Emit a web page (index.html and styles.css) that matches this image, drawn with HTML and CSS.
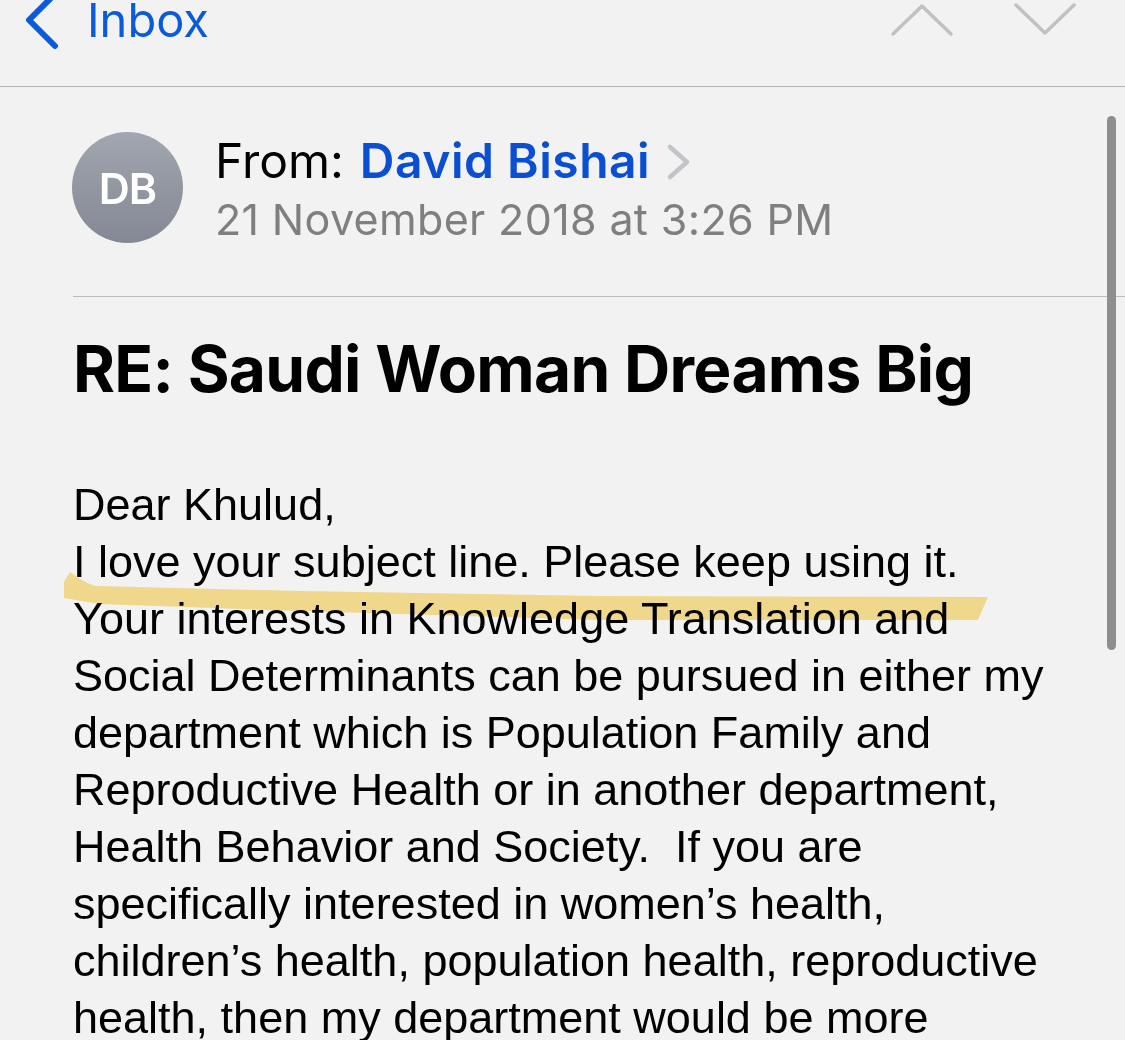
FILE: index.html
```
<!DOCTYPE html>
<html>
<head>
<meta charset="utf-8">
<link rel="stylesheet" href="styles.css">
</head>
<body>
<div class="screen">
  <div class="nav">
    <div class="back">
      <svg class="back-chev" width="40" height="60" viewBox="0 0 40 60"><path d="M30 2 L4 28 L30 54" fill="none" stroke="#0b5ad8" stroke-width="6" stroke-linecap="round" stroke-linejoin="round"/></svg>
      <span class="back-label">Inbox</span>
    </div>
    <div class="arrows">
      <svg width="64" height="40" viewBox="0 0 64 40"><path d="M3 34 L32 6 L61 34" fill="none" stroke="#c1c1c1" stroke-width="3.5" stroke-linecap="round" stroke-linejoin="round"/></svg>
      <svg width="64" height="40" viewBox="0 0 64 40"><path d="M3 5 L32 33 L61 5" fill="none" stroke="#c1c1c1" stroke-width="3.5" stroke-linecap="round" stroke-linejoin="round"/></svg>
    </div>
  </div>

  <div class="sender">
    <div class="avatar">DB</div>
    <div class="sender-info">
      <div class="from-line">
        <span class="from-label">From:</span>
        <span class="from-name">David Bishai</span>
        <svg class="disclosure" width="26" height="38" viewBox="0 0 26 38"><path d="M4 4 L21 19 L4 34" fill="none" stroke="#c3c3c8" stroke-width="4.5" stroke-linecap="round" stroke-linejoin="round"/></svg>
      </div>
      <div class="date">21 November 2018 at 3:26 PM</div>
    </div>
  </div>

  <div class="divider"></div>

  <h1 class="subject">RE: Saudi Woman Dreams Big</h1>

  <div class="message">
    <div class="line">Dear Khulud,</div>
    <div class="line">I love your subject line. Please keep using it.</div>
    <div class="line">Your interests in Knowledge Translation and</div>
    <div class="line">Social Determinants can be pursued in either my</div>
    <div class="line">department which is Population Family and</div>
    <div class="line">Reproductive Health or in another department,</div>
    <div class="line">Health Behavior and Society.&nbsp; If you are</div>
    <div class="line">specifically interested in women’s health,</div>
    <div class="line">children’s health, population health, reproductive</div>
    <div class="line">health, then my department would be more</div>
  </div>

  <svg class="highlight" width="1125" height="1040" viewBox="0 0 1125 1040">
    <path d="M70 572 C76 576 82 582 96 586 L300 591 L600 596 L988 597 L978 620 L600 620 L300 611 L100 604 L64 598 L64 582 Z" fill="#fbdc78" fill-opacity="0.8"/>
  </svg>

  <div class="scrollbar"></div>
</div>
</body>
</html>
```
FILE: styles.css
```
html, body {
  margin: 0;
  padding: 0;
  background: #f2f2f2;
}
.screen {
  position: relative;
  width: 1125px;
  height: 1040px;
  overflow: hidden;
  background: #f2f2f2;
}
.nav {
  height: 86px;
  border-bottom: 1px solid #b2b2b2;
  display: flex;
  justify-content: space-between;
  align-items: flex-start;
}
.back {
  display: flex;
  align-items: flex-start;
  margin-top: -8px;
  margin-left: 25px;
}
.back-chev {
  display: block;
}
.back-label {
  font-family: Inter, "Liberation Sans", sans-serif;
  font-size: 47px;
  color: #0b5ad8;
  margin-left: 22px;
  line-height: 56px;
}
.arrows {
  display: flex;
  gap: 59px;
  margin-right: 48px;
}
.arrows svg { display: block; }

.sender {
  display: flex;
  align-items: flex-start;
  padding-left: 72px;
  padding-top: 45px;
  height: 209px;
  box-sizing: border-box;
}
.avatar {
  width: 111px;
  height: 111px;
  border-radius: 50%;
  background: linear-gradient(#a2a6b0, #838894);
  color: #fff;
  font-family: Inter, "Liberation Sans", sans-serif;
  font-weight: 600;
  font-size: 43px;
  display: flex;
  align-items: center;
  justify-content: center;
  letter-spacing: -1px;
  flex-shrink: 0;
}
.sender-info {
  margin-left: 32px;
}
.from-line {
  display: flex;
  align-items: center;
  font-family: Inter, "Liberation Sans", sans-serif;
  font-size: 48px;
  line-height: 58px;
  height: 58px;
}
.from-label { color: #000; }
.from-name {
  color: #0a4fd2;
  font-weight: 600;
  margin-left: 16px;
  letter-spacing: 0.5px;
}
.disclosure {
  margin-left: 16px;
  margin-top: 2px;
}
.date {
  font-family: Inter, "Liberation Sans", sans-serif;
  font-size: 43px;
  color: #7f7f7f;
  line-height: 58px;
  letter-spacing: 0.35px;
}
.divider {
  margin-left: 73px;
  border-top: 1px solid #bdbdbd;
}
.subject {
  margin: 0;
  padding-left: 73px;
  padding-top: 36px;
  font-family: Inter, "Liberation Sans", sans-serif;
  font-weight: 700;
  font-size: 64px;
  line-height: 72px;
  color: #000;
  letter-spacing: -0.7px;
}
.message {
  padding-left: 73px;
  padding-top: 71px;
  font-family: "Liberation Sans", Arial, sans-serif;
  font-size: 45px;
  line-height: 57px;
  color: #000;
}
.line { white-space: nowrap; }
.highlight {
  position: absolute;
  left: 0;
  top: 0;
  mix-blend-mode: multiply;
  pointer-events: none;
}
.scrollbar {
  position: absolute;
  right: 9px;
  top: 116px;
  width: 9px;
  height: 534px;
  border-radius: 5px;
  background: #8e8e8e;
}
```
